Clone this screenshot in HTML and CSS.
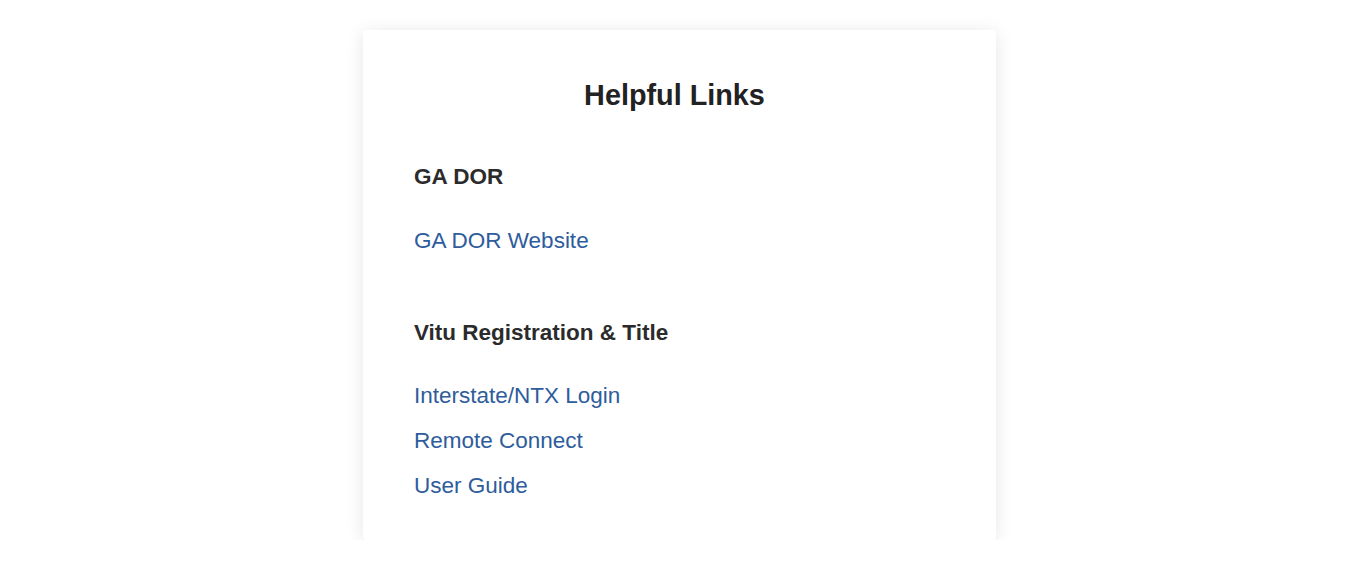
FILE: index.html
```html
<!DOCTYPE html>
<html lang="en">
<head>
<meta charset="utf-8">
<title>Helpful Links</title>
<link rel="stylesheet" href="styles.css">
</head>
<body>
<div class="page">
  <section class="card">
    <h1 class="card-title">Helpful Links</h1>
    <div class="group">
      <h2 class="group-title">GA DOR</h2>
      <ul class="links">
        <li><a class="link" href="#">GA DOR Website</a></li>
      </ul>
    </div>
    <div class="group group-second">
      <h2 class="group-title">Vitu Registration &amp; Title</h2>
      <ul class="links">
        <li><a class="link" href="#">Interstate/NTX Login</a></li>
        <li><a class="link" href="#">Remote Connect</a></li>
        <li><a class="link" href="#">User Guide</a></li>
      </ul>
    </div>
  </section>
</div>
</body>
</html>
```

FILE: styles.css
```css
* { box-sizing: border-box; }
html, body {
  margin: 0;
  padding: 0;
  background: #ffffff;
  font-family: "Liberation Sans", Arial, sans-serif;
}
.page {
  display: flex;
  justify-content: center;
  padding-top: 30px;
}
.card {
  width: 633px;
  margin-right: 1px;
  background: #ffffff;
  border-radius: 4px;
  box-shadow: 0 2px 18px rgba(0, 0, 0, 0.10);
  padding: 48px 61px 41px 51px;
  display: flex;
  flex-direction: column;
}
.card-title {
  margin: 0;
  font-size: 28.8px;
  line-height: 34px;
  font-weight: 700;
  color: #222222;
  text-align: center;
}
.group {
  display: flex;
  flex-direction: column;
  margin-top: 52px;
}
.group-second {
  margin-top: 66px;
}
.group-title {
  margin: 0;
  font-size: 22.5px;
  line-height: 26px;
  font-weight: 700;
  color: #2b2b2b;
}
.links {
  list-style: none;
  margin: 38px 0 0 0;
  padding: 0;
  display: flex;
  flex-direction: column;
  gap: 19px;
}
.group-second .links {
  margin-top: 37px;
}
.links li {
  font-size: 22.5px;
  line-height: 26px;
}
.link {
  color: #2e5c9c;
  text-decoration: none;
}
```
